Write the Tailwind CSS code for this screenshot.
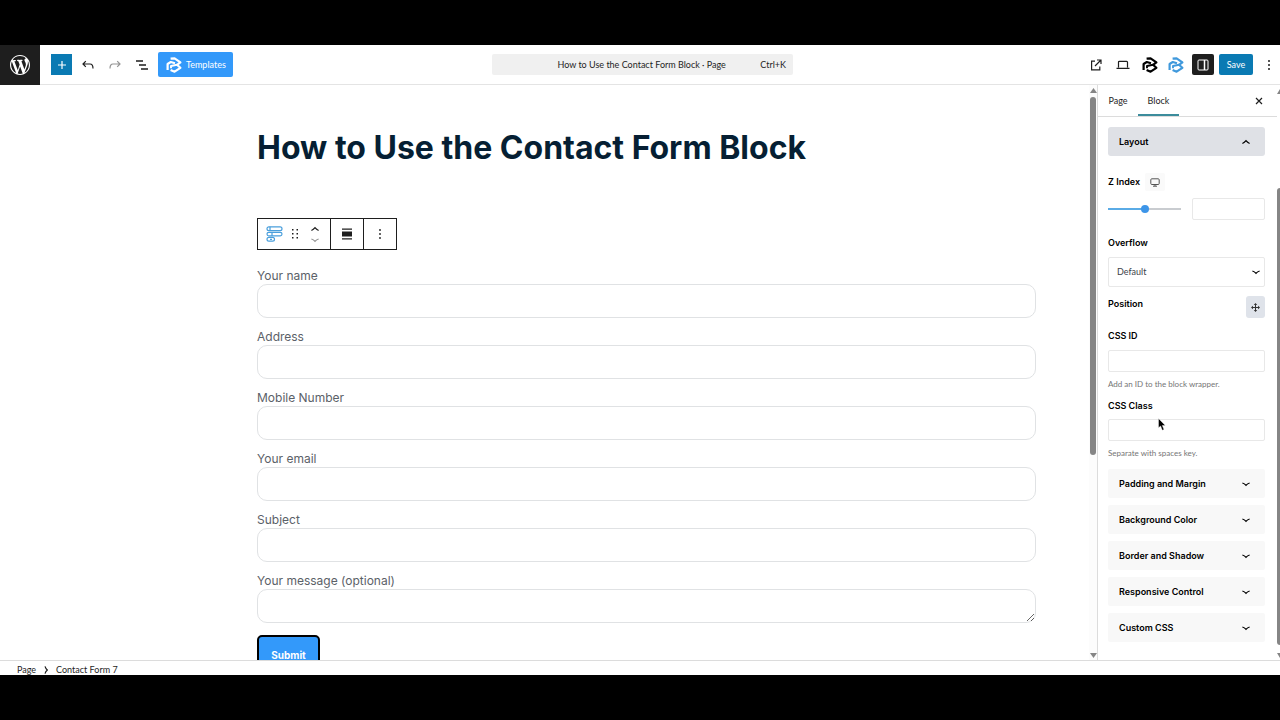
<!DOCTYPE html>
<html lang="en">
<head>
<meta charset="utf-8">
<meta name="viewport" content="width=device-width, initial-scale=1">
<title>How to Use the Contact Form Block</title>
<script src="https://cdn.jsdelivr.net/npm/@tailwindcss/browser@4"></script>
</head>
<body class="bg-black">
<svg class="hidden" aria-hidden="true">
  <symbol id="brand" viewBox="0 0 16 16" fill="none" stroke="currentColor" stroke-width="2.200" stroke-linejoin="round">
    <path d="M4.600 1.600L8.600 1.300L14.400 5.300L11 7.800L14.400 10.800L8.600 14.700L4.600 12.900"/>
    <path d="M1.600 13V7L4.800 5L9 6.300"/>
    <path d="M5 11.200V9L11 7.800" stroke-width="1.900"/>
  </symbol>
  <symbol id="down" viewBox="0 0 8 8" fill="none" stroke="currentColor" stroke-width="1.200"><path d="M.4 3Q2.500 3.600 4 5.300Q5.500 3.600 7.600 3"/></symbol>
  <symbol id="up" viewBox="0 0 8 8" fill="none" stroke="currentColor" stroke-width="1.200"><path d="M.4 5.500Q2.500 4.500 4 2.700Q5.500 4.500 7.600 5.500"/></symbol>
</svg>
<div class="flex h-screen flex-col py-[45px] font-['Lato',sans-serif] text-[9px] text-[#1e1e1e]">

  <header class="flex h-10 shrink-0 items-center justify-between border-b border-[#e4e4e4] bg-white">
    <div class="flex flex-1 items-center">
      <a href="#" aria-label="WordPress" class="flex h-10 w-10 items-center justify-center bg-[#1e1e1e] text-white">
        <svg class="size-5" viewBox="0 0 20 20" fill="currentColor"><path d="M20 10c0-5.510-4.490-10-10-10C4.480 0 0 4.490 0 10c0 5.520 4.480 10 10 10 5.510 0 10-4.480 10-10zM7.780 15.370L4.370 6.220c.55-.02 1.170-.08 1.170-.08.5-.06.44-1.130-.06-1.110 0 0-1.450.11-2.370.11-.18 0-.37 0-.58-.01C4.120 2.690 6.870 1.110 10 1.110c2.330 0 4.450.87 6.050 2.340-.68-.11-1.650.39-1.650 1.580 0 .74.45 1.360.9 2.100.35.61.55 1.360.55 2.460 0 1.490-1.400 5-1.400 5l-3.030-8.370c.54-.02.82-.17.82-.17.5-.05.44-1.250-.06-1.220 0 0-1.440.12-2.380.12-.87 0-2.330-.12-2.330-.12-.5-.03-.56 1.200-.06 1.220l.92.08 1.260 3.410zM17.410 10c.24-.64.74-1.870.43-4.250.7 1.290 1.050 2.710 1.050 4.250 0 3.290-1.730 6.240-4.400 7.780.97-2.590 1.940-5.200 2.920-7.780zM6.100 18.090C3.120 16.650 1.110 13.530 1.110 10c0-1.300.23-2.480.72-3.590C3.250 10.300 4.670 14.200 6.100 18.090zm4.030-6.630l2.580 6.980c-.86.29-1.760.45-2.710.45-.79 0-1.570-.11-2.290-.33.81-2.380 1.620-4.740 2.420-7.100z"/></svg>
      </a>
      <button aria-label="Add block" class="ml-[11px] flex h-[21px] w-[21px] items-center justify-center bg-[#0a7ab3] text-white">
        <svg class="size-2" viewBox="0 0 8 8" stroke="currentColor" stroke-width="1.200"><path d="M4 0V8M0 4H8"/></svg>
      </button>
      <button aria-label="Undo" class="ml-[10px] flex w-3 justify-center"><svg class="h-3 w-3" viewBox="0 0 12 12" fill="none" stroke="currentColor" stroke-width="1.200"><path d="M3.800 2.200L1 5L3.800 7.800M1 5H8Q11 5 11 9.500"/></svg></button>
      <button aria-label="Redo" class="ml-[15px] flex w-3 justify-center text-[#949494]"><svg class="h-3 w-3" viewBox="0 0 12 12" fill="none" stroke="currentColor" stroke-width="1.200"><path d="M8.200 2.200L11 5L8.200 7.800M11 5H4Q1 5 1 9.500"/></svg></button>
      <button aria-label="Document overview" class="ml-[15px] flex w-3 justify-center"><svg class="h-3 w-3" viewBox="0 0 12 12" stroke="currentColor" stroke-width="1.400"><path d="M0 2H7M3 6H10M5 10H12"/></svg></button>
      <button class="ml-[10px] flex h-[25px] w-[75px] items-center gap-1 rounded-[2px] bg-[#3399fa] pl-2 text-white"><svg class="size-4 shrink-0"><use href="#brand"/></svg>Templates</button>
    </div>
    <button class="ml-3 flex h-[21px] w-[301px] items-center rounded-[2px] bg-[#f0f0f0] px-[7px]"><span class="w-6"></span><span class="flex-1">How to Use the Contact Form Block · Page</span><span>Ctrl+K</span></button>
    <div class="flex flex-1 items-center justify-end pr-[7px]">
      <button aria-label="View page"><svg class="block size-3" viewBox="0 0 12 12" fill="none" stroke="currentColor" stroke-width="1.200"><path d="M5 2.200H1.600V10.800H9.800V7.500M7 1H11V5M11 1L5 7"/></svg></button>
      <button aria-label="Preview" class="ml-[14px]"><svg class="block h-3 w-[14px]" viewBox="0 0 14 12" fill="none" stroke="currentColor" stroke-width="1.200"><path d="M2.500 8.500V3.200Q2.500 2.300 3.400 2.300H10.600Q11.500 2.300 11.500 3.200V8.500M.5 9.300H13.500"/></svg></button>
      <button aria-label="Block library" class="ml-[12px] text-black"><svg class="block size-4"><use href="#brand"/></svg></button>
      <button aria-label="Block settings" class="ml-[10px] text-[#4099dc]"><svg class="block size-4"><use href="#brand"/></svg></button>
      <button aria-label="Settings" class="ml-2 flex h-[21px] w-[22px] items-center justify-center rounded-[2px] bg-[#1e1e1e] text-white"><svg class="size-3" viewBox="0 0 12 12" fill="none" stroke="currentColor"><rect x="1" y="1" width="10" height="10" rx="1"/><path d="M7.500 1V11" stroke-width="1.500"/></svg></button>
      <button class="ml-[5px] h-[21px] w-[34px] rounded-[2px] bg-[#0a7ab3] text-white">Save</button>
      <button aria-label="Options" class="ml-[12px]"><svg class="block h-3 w-2" viewBox="0 0 8 12" fill="currentColor"><circle cx="4" cy="2" r="1"/><circle cx="4" cy="6" r="1"/><circle cx="4" cy="10" r="1"/></svg></button>
    </div>
  </header>

  <div class="flex min-h-0 flex-1 bg-white">
    <main class="min-w-0 flex-1 overflow-hidden pr-[53px] pl-[257px]">
      <h1 class="mt-[42px] font-['Inter',sans-serif] text-[32px] leading-[42px] font-bold text-[#061f33]">How to Use the Contact Form Block</h1>
      <div role="toolbar" aria-label="Block tools" class="mt-[49px] flex h-8 w-[140px] items-stretch border border-[#1e1e1e]">
        <div class="flex w-[73px] items-center border-r border-[#1e1e1e] pl-2">
          <button aria-label="Contact Form 7" class="text-[#4a9fdc]"><svg class="block h-4 w-[17px]" viewBox="0 0 17 16" fill="none" stroke="currentColor" stroke-width="1.200"><rect x="1" y=".8" width="15" height="3.800" rx="1.900"/><rect x="1" y="6.300" width="15" height="3.600" rx="1.800"/><rect x="1" y="11.400" width="7.500" height="3.800" rx="1.900"/><path d="M4 .8V4.600M6 6.300V9.900M4 13.300H6"/></svg></button>
          <button aria-label="Drag" class="ml-2"><svg class="block h-3 w-2" viewBox="0 0 8 12" fill="currentColor"><path d="M1 1h1.500v1.500H1zM5.500 1H7v1.500H5.500zM1 5h1.500v1.500H1zM5.500 5H7v1.500H5.500zM1 9h1.500v1.500H1zM5.500 9H7v1.500H5.500z"/></svg></button>
          <div class="ml-3 flex flex-col gap-[3px]">
            <button aria-label="Move up"><svg class="block size-2"><use href="#up"/></svg></button>
            <button aria-label="Move down" class="text-[#949494]"><svg class="block size-2"><use href="#down"/></svg></button>
          </div>
        </div>
        <button aria-label="Align" class="flex w-[33px] items-center justify-center border-r border-[#1e1e1e]"><svg class="h-3 w-[10px]" viewBox="0 0 10 12" fill="currentColor"><path d="M0 .5H10V1.700H0zM0 3.500H10V8.500H0zM0 10.300H10V11.500H0z"/></svg></button>
        <button aria-label="More" class="flex flex-1 items-center justify-center"><svg class="h-3 w-2" viewBox="0 0 8 12" fill="currentColor"><circle cx="4" cy="2" r=".9"/><circle cx="4" cy="6" r=".9"/><circle cx="4" cy="10" r=".9"/></svg></button>
      </div>
      <form class="mt-[17px] flex flex-col gap-[10px] font-['Inter',sans-serif] text-[12px] leading-[15px] text-[#5b6168]">
        <div><label for="name" class="block pb-[1px] pt-[1px]">Your name</label><input id="name" class="block h-[34px] w-full rounded-[10px] border border-[#e0e2e4] px-3"></div>
        <div><label for="address" class="block pb-[1px] pt-[1px]">Address</label><input id="address" class="block h-[34px] w-full rounded-[10px] border border-[#e0e2e4] px-3"></div>
        <div><label for="mobile" class="block pb-[1px] pt-[1px]">Mobile Number</label><input id="mobile" class="block h-[34px] w-full rounded-[10px] border border-[#e0e2e4] px-3"></div>
        <div><label for="email" class="block pb-[1px] pt-[1px]">Your email</label><input id="email" type="email" class="block h-[34px] w-full rounded-[10px] border border-[#e0e2e4] px-3"></div>
        <div><label for="subject" class="block pb-[1px] pt-[1px]">Subject</label><input id="subject" class="block h-[34px] w-full rounded-[10px] border border-[#e0e2e4] px-3"></div>
        <div><label for="message" class="block pb-[1px] pt-[1px]">Your message (optional)</label><textarea id="message" class="block h-[34px] w-full resize-y rounded-[10px] border border-[#e0e2e4] px-3"></textarea></div>
        <button type="button" class="mt-[2px] h-10 w-[63px] shrink-0 rounded-[5px] border-2 border-black bg-[#3399fa] text-[10px] font-bold text-white">Submit</button>
      </form>
    </main>

    <div class="flex w-2 shrink-0 flex-col items-center bg-[#fcfcfc] pt-[3px] pb-[2px] text-[#858585]">
      <svg class="h-[5px] w-[7px]" viewBox="0 0 7 5" fill="currentColor"><path d="M3.500 0L7 5H0z"/></svg>
      <div class="mt-1 h-[358px] w-[6px] rounded-full bg-current"></div>
      <svg class="mt-auto h-[5px] w-[7px]" viewBox="0 0 7 5" fill="currentColor"><path d="M3.500 5L7 0H0z"/></svg>
    </div>

    <aside class="flex w-[183px] shrink-0 border-l border-[#dcdcdc]">
      <div class="min-w-0 flex-1">
        <div class="flex h-8 items-stretch border-b border-[#dcdcdc] pl-[10px]">
          <button class="w-5 whitespace-nowrap">Page</button>
          <button class="ml-[10px] w-[41px] border-b-2 border-[#3c8c9c] pt-[2px]">Block</button>
          <button aria-label="Close settings" class="mr-[14px] ml-auto"><svg class="size-2" viewBox="0 0 8 8" stroke="currentColor" stroke-width="1.200"><path d="M1 1L7 7M7 1L1 7"/></svg></button>
        </div>
        <div class="flex flex-col pt-[10px] pr-[12px] pl-[10px] font-['Inter',sans-serif] font-semibold text-black">
          <button class="flex h-[29px] items-center justify-between rounded-[3px] bg-[#dfe1e6] px-[11px]">Layout<svg class="mr-1 size-2"><use href="#up"/></svg></button>
          <div class="mt-[17px] flex h-[18px] items-center gap-[5px]"><label for="zindex">Z Index</label><button aria-label="Desktop" class="flex h-[18px] w-5 items-center justify-center rounded-[2px] bg-[#fafafa] text-[#555]"><svg class="h-[9px] w-[10px]" viewBox="0 0 10 9" fill="none" stroke="currentColor"><rect x=".8" y=".8" width="8.400" height="5.700" rx="1"/><path d="M5 6.500V8M3 8.200H7"/></svg></button></div>
          <div class="mt-[7px] flex items-center gap-[11px]">
            <input id="zindex" type="range" min="0" max="100" value="51" class="h-2 w-[73px] appearance-none bg-linear-to-r from-[#5aabe6] from-50% to-[#c9ccd0] to-50% bg-[length:100%_2px] bg-center bg-no-repeat [&::-webkit-slider-thumb]:size-2 [&::-webkit-slider-thumb]:appearance-none [&::-webkit-slider-thumb]:rounded-full [&::-webkit-slider-thumb]:bg-[#3d95e8]">
            <input aria-label="Z Index value" class="h-[22px] min-w-0 flex-1 rounded-[2px] border border-[#e8e8e8] px-1">
          </div>
          <label for="overflow" class="mt-[15px] leading-4">Overflow</label>
          <div class="relative mt-[6px]">
            <select id="overflow" class="block h-[30px] w-full appearance-none rounded-[2px] border border-[#e8e8e8] pl-2 font-['Lato',sans-serif] font-normal text-[#3c434a]"><option>Default</option></select>
            <svg class="pointer-events-none absolute top-[11px] right-[5px] size-2"><use href="#down"/></svg>
          </div>
          <div class="mt-[9px] flex items-center justify-between"><span class="self-start leading-4">Position</span><button aria-label="Edit position" class="flex h-[22px] w-[19px] items-center justify-center rounded-[3px] bg-[#dfe3ea] text-[#333]"><svg class="size-[9px]" viewBox="0 0 9 9" fill="currentColor"><path d="M4.500 0L6.200 2H5V4H7V2.800L9 4.500L7 6.200V5H5V7H6.200L4.500 9L2.800 7H4V5H2V6.200L0 4.500L2 2.800V4H4V2H2.800z"/></svg></button></div>
          <label for="cssid" class="mt-[10px] leading-4">CSS ID</label>
          <input id="cssid" class="mt-[6px] h-[22px] rounded-[2px] border border-[#e8e8e8] px-1">
          <p class="mt-1 font-['Lato',sans-serif] text-[8px] leading-4 font-normal text-[#757575]">Add an ID to the block wrapper.</p>
          <label for="cssclass" class="mt-[6px] leading-4">CSS Class</label>
          <input id="cssclass" class="mt-[5px] h-[22px] rounded-[2px] border border-[#e8e8e8] px-1">
          <p class="mt-1 font-['Lato',sans-serif] text-[8px] leading-4 font-normal text-[#757575]">Separate with spaces key.</p>
          <div class="mt-2 flex flex-col gap-[7px]">
            <button class="flex h-[29px] items-center justify-between rounded-[2px] bg-[#f8f8f8] px-[11px]">Padding and Margin<svg class="mr-1 size-2"><use href="#down"/></svg></button>
            <button class="flex h-[29px] items-center justify-between rounded-[2px] bg-[#f8f8f8] px-[11px]">Background Color<svg class="mr-1 size-2"><use href="#down"/></svg></button>
            <button class="flex h-[29px] items-center justify-between rounded-[2px] bg-[#f8f8f8] px-[11px]">Border and Shadow<svg class="mr-1 size-2"><use href="#down"/></svg></button>
            <button class="flex h-[29px] items-center justify-between rounded-[2px] bg-[#f8f8f8] px-[11px]">Responsive Control<svg class="mr-1 size-2"><use href="#down"/></svg></button>
            <button class="flex h-[29px] items-center justify-between rounded-[2px] bg-[#f8f8f8] px-[11px]">Custom CSS<svg class="mr-1 size-2"><use href="#down"/></svg></button>
          </div>
        </div>
      </div>
      <div class="flex w-[3px] shrink-0 flex-col overflow-hidden pt-1 pb-[2px] text-[#858585]">
        <svg class="h-[5px] w-[6px] shrink-0" viewBox="0 0 6 5" fill="currentColor"><path d="M3 0L6 5H0z"/></svg>
        <div class="mt-[94px] min-h-0 flex-1 rounded-l-full bg-current"></div>
        <svg class="mt-2 h-[5px] w-[6px] shrink-0" viewBox="0 0 6 5" fill="currentColor"><path d="M3 5L6 0H0z"/></svg>
      </div>
    </aside>
  </div>

  <footer class="h-[15px] shrink-0 border-t border-[#dcdcdc] bg-white">
    <nav aria-label="Block breadcrumb" class="flex h-full items-center pt-1 pl-[17px]"><a href="#">Page</a><svg class="mx-[6px] size-2 -rotate-90"><use href="#down"/></svg><a href="#">Contact Form 7</a></nav>
  </footer>
</div>
<svg class="pointer-events-none absolute top-[418px] left-[1158px] h-[13px] w-[8px]" viewBox="0 0 8 13" stroke="white" stroke-width=".4" aria-hidden="true"><path d="M.5.5V9.800L2.600 8L4.300 12.300L6 11.500L4.300 7.500H7.300z"/></svg>
</body>
</html>
